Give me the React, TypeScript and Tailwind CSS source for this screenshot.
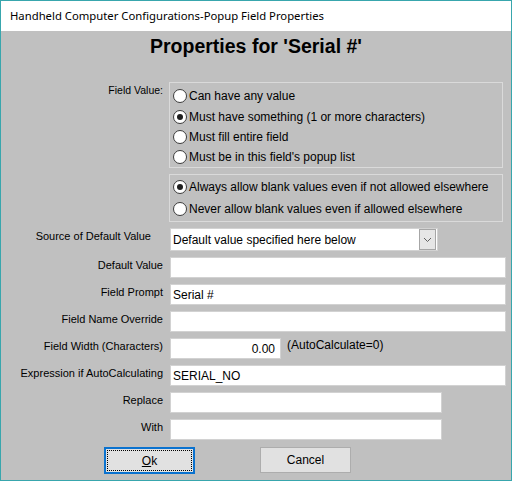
import React from "react";

const font = { fontFamily: '"Liberation Sans", Arial, sans-serif' };

function Radio({ label, checked, rowClass }: { label: string; checked?: boolean; rowClass: string }) {
  return (
    <div className={`flex items-center pl-[3px] ${rowClass}`}>
      <span className="w-[14px] h-[14px] rounded-full border border-[#3c3c3c] bg-white flex items-center justify-center shrink-0">
        {checked && <span className="w-[6px] h-[6px] rounded-full bg-[#1e1e1e]" />}
      </span>
      <span className="ml-[2px] text-[12px] leading-[14px] text-black">{label}</span>
    </div>
  );
}

function Row({ label, children, labelClass = "" }: { label: string; children: React.ReactNode; labelClass?: string }) {
  return (
    <div className="flex items-start">
      <div className={`w-[162px] shrink-0 text-right text-[11px] leading-[14px] text-black ${labelClass}`}>{label}</div>
      <div className="pl-[7px] flex items-start">{children}</div>
    </div>
  );
}

function TextBox({ value = "", w, right }: { value?: string; w: string; right?: boolean }) {
  return (
    <div
      className={`${w} h-[21px] bg-white border border-[#d2d2d2] flex items-center text-[12px] text-black ${
        right ? "justify-end pr-[5px]" : "pl-[2px]"
      }`}
    >
      {value}
    </div>
  );
}

export default function App() {
  return (
    <div className="w-[512px] h-[481px] border border-[#38a6ad] bg-[#c0c0c0] flex flex-col overflow-hidden" style={font}>
      {/* title bar */}
      <div className="h-[30px] bg-white flex items-center pl-[9px] shrink-0">
        <span className="text-[11.3px] text-black" style={{ fontFamily: '"Noto Sans", "Open Sans", sans-serif' }}>
          Handheld Computer Configurations-Popup Field Properties
        </span>
      </div>

      <h1 className="mt-[4px] text-center text-[19.5px] leading-[22px] font-bold text-black">Properties for 'Serial #'</h1>

      <div className="mt-[25px] flex flex-col gap-[6px]">
        {/* field value group */}
        <div className="flex items-start">
          <div className="w-[162px] shrink-0 text-right text-[10.5px] leading-[14px] pt-px text-black">Field Value:</div>
          <div className="pl-[6px] flex flex-col gap-[6px]">
            <div className="w-[334px] h-[86px] border border-[#dadada] pt-[2px]">
              <Radio label="Can have any value" rowClass="h-[21px]" />
              <Radio label="Must have something (1 or more characters)" checked rowClass="h-[21px]" />
              <Radio label="Must fill entire field" rowClass="h-[20px]" />
              <Radio label="Must be in this field's popup list" rowClass="h-[19px]" />
            </div>
            <div className="w-[334px] h-[48px] border border-[#dadada] pt-[1px]">
              <Radio label="Always allow blank values even if not allowed elsewhere" checked rowClass="h-[22px]" />
              <Radio label="Never allow blank values even if allowed elsewhere" rowClass="h-[22px]" />
            </div>
          </div>
        </div>

        <div className="flex flex-col gap-[6px]">
          <Row label="Source of Default Value" labelClass="pr-[12px] pt-px">
            <div className="w-[268px] h-[23px] bg-white border border-[#d2d2d2] flex items-center justify-between text-[12px] text-black pl-[2px]">
              <span>Default value specified here below</span>
              <span className="w-[17px] h-[21px] mr-px border border-[#a6a6a6] bg-[#e6e6e6] flex items-center justify-center">
                <svg width="9" height="6" viewBox="0 0 9 6">
                  <path d="M1 1l3.5 3.5L8 1" fill="none" stroke="#606060" strokeWidth="1" />
                </svg>
              </span>
            </div>
          </Row>
          <Row label="Default Value" labelClass="pt-px">
            <TextBox w="w-[336px]" />
          </Row>
          <Row label="Field Prompt" labelClass="pt-px">
            <TextBox w="w-[336px]" value="Serial #" />
          </Row>
          <Row label="Field Name Override" labelClass="pt-px">
            <TextBox w="w-[336px]" />
          </Row>
          <Row label="Field Width (Characters)" labelClass="pt-px">
            <TextBox w="w-[111px]" value="0.00" right />
            <span className="ml-[6px] text-[12px] leading-[14px] text-black">(AutoCalculate=0)</span>
          </Row>
          <Row label="Expression if AutoCalculating" labelClass="pt-px">
            <TextBox w="w-[336px]" value="SERIAL_NO" />
          </Row>
          <Row label="Replace" labelClass="pt-px">
            <TextBox w="w-[272px]" />
          </Row>
          <Row label="With" labelClass="pt-px">
            <TextBox w="w-[272px]" />
          </Row>
        </div>

        {/* buttons */}
        <div className="flex items-start pl-[103px] gap-[65px] mt-px">
          <button className="w-[91px] h-[27px] border-2 border-[#0a72cf] bg-[#e1e1e1] p-px">
            <span className="w-full h-full border border-dotted border-black flex items-center justify-center text-[12px] text-black">
              <span className="underline">O</span>k
            </span>
          </button>
          <button className="w-[91px] h-[26px] border border-[#adadad] bg-[#e1e1e1] flex items-center justify-center text-[12px] text-black">
            Cancel
          </button>
        </div>
      </div>
    </div>
  );
}
